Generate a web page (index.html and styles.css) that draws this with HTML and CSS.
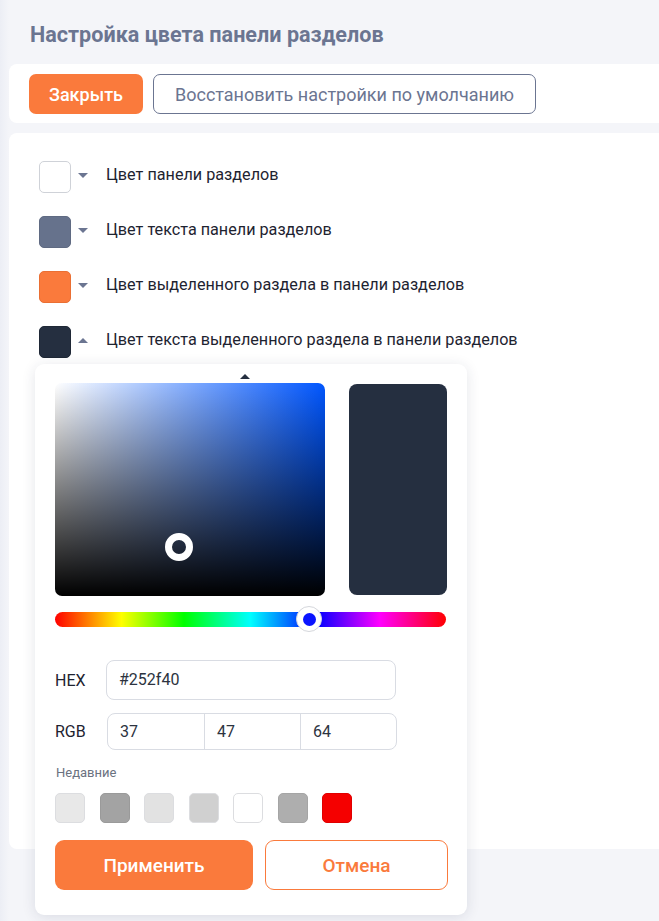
FILE: index.html
```html
<!DOCTYPE html>
<html lang="ru">
<head>
<meta charset="utf-8">
<title>Настройка цвета панели разделов</title>
<link rel="stylesheet" href="styles.css">
</head>
<body>
<main class="page">
  <h1 class="title">Настройка цвета панели разделов</h1>
  <div class="card toolbar">
    <button class="btn btn-primary">Закрыть</button>
    <button class="btn btn-outline">Восстановить настройки по умолчанию</button>
  </div>
  <div class="card settings">
    <div class="row">
      <span class="swatch sw-white"></span>
      <span class="caret down"></span>
      <span class="label">Цвет панели разделов</span>
    </div>
    <div class="row">
      <span class="swatch sw-gray"></span>
      <span class="caret down"></span>
      <span class="label">Цвет текста панели разделов</span>
    </div>
    <div class="row">
      <span class="swatch sw-orange"></span>
      <span class="caret down"></span>
      <span class="label">Цвет выделенного раздела в панели разделов</span>
    </div>
    <div class="row row-open">
      <span class="swatch sw-dark"></span>
      <span class="caret up"></span>
      <span class="label">Цвет текста выделенного раздела в панели разделов</span>

      <div class="picker">
        <span class="picker-arrow"></span>
        <div class="picker-top">
          <div class="saturation">
            <span class="sat-pointer"></span>
          </div>
          <div class="preview"></div>
        </div>
        <div class="hue">
          <span class="hue-thumb"><span class="hue-dot"></span></span>
        </div>
        <div class="field">
          <span class="field-label">HEX</span>
          <div class="input hex">#252f40</div>
        </div>
        <div class="field">
          <span class="field-label">RGB</span>
          <div class="input rgb">
            <span>37</span>
            <span>47</span>
            <span>64</span>
          </div>
        </div>
        <div class="recent-title">Недавние</div>
        <div class="recent">
          <span class="rc rc1"></span>
          <span class="rc rc2"></span>
          <span class="rc rc3"></span>
          <span class="rc rc4"></span>
          <span class="rc rc5"></span>
          <span class="rc rc6"></span>
          <span class="rc rc7"></span>
        </div>
        <div class="actions">
          <button class="btn btn-apply">Применить</button>
          <button class="btn btn-cancel">Отмена</button>
        </div>
      </div>
    </div>
  </div>
</main>
</body>
</html>
```
FILE: styles.css
```css
* { box-sizing: border-box; }

html, body {
  margin: 0;
  height: 100%;
}

body {
  background: linear-gradient(to right, #eceef5 0, #f4f5f9 9px) #f4f5f9;
  font-family: Roboto, "Noto Sans", sans-serif;
  color: #1e2330;
  overflow: hidden;
}

.page {
  padding-left: 9px;
}

.title {
  margin: 0;
  padding: 22px 0 0 21px;
  height: 55px;
  font-size: 21.6px;
  line-height: 26px;
  font-weight: 700;
  color: #6b7591;
}

.card {
  background: #fff;
  border-radius: 8px 0 0 8px;
}

.toolbar {
  margin-top: 9px;
  height: 59px;
  padding: 10px 20px;
  display: flex;
  gap: 10px;
  align-items: flex-start;
}

.btn {
  font-family: inherit;
  border-radius: 7px;
  cursor: pointer;
}

.toolbar .btn {
  height: 40px;
  font-size: 18px;
  padding: 0;
}

.btn-primary {
  background: #fa7a3c;
  border: none;
  color: #fff;
  font-weight: 500;
  width: 114px;
}

.btn-outline {
  background: #fff;
  border: 1px solid #6b7591;
  color: #6b7591;
  width: 383px;
}

.settings {
  margin-top: 10px;
  height: 716px;
  padding: 28px 30px;
  display: flex;
  flex-direction: column;
  gap: 23px;
}

.row {
  display: flex;
  align-items: center;
  height: 32px;
  position: relative;
}

.swatch {
  width: 32px;
  height: 32px;
  border-radius: 5px;
  border: 1px solid #cfd2d8;
  flex: none;
}

.sw-white { background: #fff; }
.sw-gray { background: #66728c; border-color: #5f6a82; }
.sw-orange { background: #fa7a3c; border-color: #ea6f33; }
.sw-dark { background: #252f40; border-color: #1f2836; }

.caret {
  width: 0;
  height: 0;
  margin: -4px 18px 0 7px;
  border-left: 5px solid transparent;
  border-right: 5px solid transparent;
}

.caret.down { border-top: 5px solid #6b7591; }
.caret.up { border-bottom: 5px solid #6b7591; }

.label {
  font-size: 16.2px;
  line-height: 20px;
  margin-top: -4px;
  color: #1e2330;
}

/* Popup colour picker */
.picker {
  position: absolute;
  left: -4px;
  top: 38px;
  width: 432px;
  height: 551px;
  background: #fff;
  border-radius: 9px;
  box-shadow: 0 2px 14px rgba(30, 40, 70, 0.12);
  padding: 19px 20px 0;
  z-index: 5;
}

.picker-arrow {
  position: absolute;
  left: 205px;
  top: 10px;
  width: 0;
  height: 0;
  border-left: 5px solid transparent;
  border-right: 5px solid transparent;
  border-bottom: 5px solid #252f40;
}

.picker-top {
  display: flex;
  gap: 24px;
  height: 213px;
}

.saturation {
  position: relative;
  width: 270px;
  height: 213px;
  border-radius: 7px;
  background:
    linear-gradient(to top, #000, rgba(0, 0, 0, 0)),
    linear-gradient(to right, #fff, #0056ff);
}

.sat-pointer {
  position: absolute;
  left: 110px;
  top: 150px;
  width: 28px;
  height: 28px;
  border-radius: 50%;
  border: 7px solid #fff;
}

.preview {
  margin-top: 1px;
  width: 98px;
  height: 211px;
  border-radius: 8px;
  background: #252f40;
}

.hue {
  position: relative;
  margin-top: 16px;
  width: 391px;
  height: 15px;
  border-radius: 8px;
  background: linear-gradient(to right,
    #ff0000 0%, #ffff00 17%, #00ff00 33%, #00ffff 50%,
    #0000ff 67%, #ff00ff 83%, #ff0000 100%);
}

.hue-thumb {
  position: absolute;
  left: 241px;
  top: -6px;
  width: 26px;
  height: 26px;
  border-radius: 50%;
  background: #fff;
  border: 1px solid #d5d7dc;
  display: flex;
  align-items: center;
  justify-content: center;
}

.hue-dot {
  width: 13px;
  height: 13px;
  border-radius: 50%;
  background: #0a14ff;
}

.field {
  display: flex;
  align-items: center;
  margin-top: 33px;
}

.field + .field {
  margin-top: 13px;
}

.field-label {
  width: 51px;
  font-size: 16px;
  color: #1e2330;
}

.input {
  width: 290px;
  border: 1px solid #d9dce3;
  border-radius: 8px;
  font-size: 16px;
  color: #2c3340;
}

.hex {
  height: 40px;
  line-height: 38px;
  padding-left: 12px;
}

.rgb {
  margin-left: 1px;
  height: 37px;
  display: grid;
  grid-template-columns: 1fr 1fr 1fr;
}

.rgb span {
  line-height: 35px;
  padding-left: 12px;
}

.rgb span + span {
  border-left: 1px solid #d9dce3;
}

.recent-title {
  margin-top: 15px;
  padding-left: 1px;
  font-size: 13px;
  color: #6b7280;
}

.recent {
  display: flex;
  gap: 14.5px;
  margin-top: 13px;
}

.rc {
  width: 30px;
  height: 30px;
  border-radius: 5px;
  border: 1px solid #dcdde0;
}

.rc1 { background: #e8e8e8; }
.rc2 { background: #a3a3a3; border-color: #9a9a9a; }
.rc3 { background: #e2e2e2; }
.rc4 { background: #d0d0d0; }
.rc5 { background: #fff; }
.rc6 { background: #aeaeae; border-color: #a5a5a5; }
.rc7 { background: #f50000; border-color: #e00000; }

.actions {
  display: grid;
  grid-template-columns: 198px 183px;
  gap: 12px;
  margin-top: 17px;
}

.actions .btn {
  height: 50px;
  font-size: 19px;
  font-weight: 500;
  border-radius: 9px;
}

.btn-apply {
  background: #fa7a3c;
  border: none;
  color: #fff;
}

.btn-cancel {
  background: #fff;
  border: 1px solid #fa7a3c;
  color: #fa7a3c;
}
```
